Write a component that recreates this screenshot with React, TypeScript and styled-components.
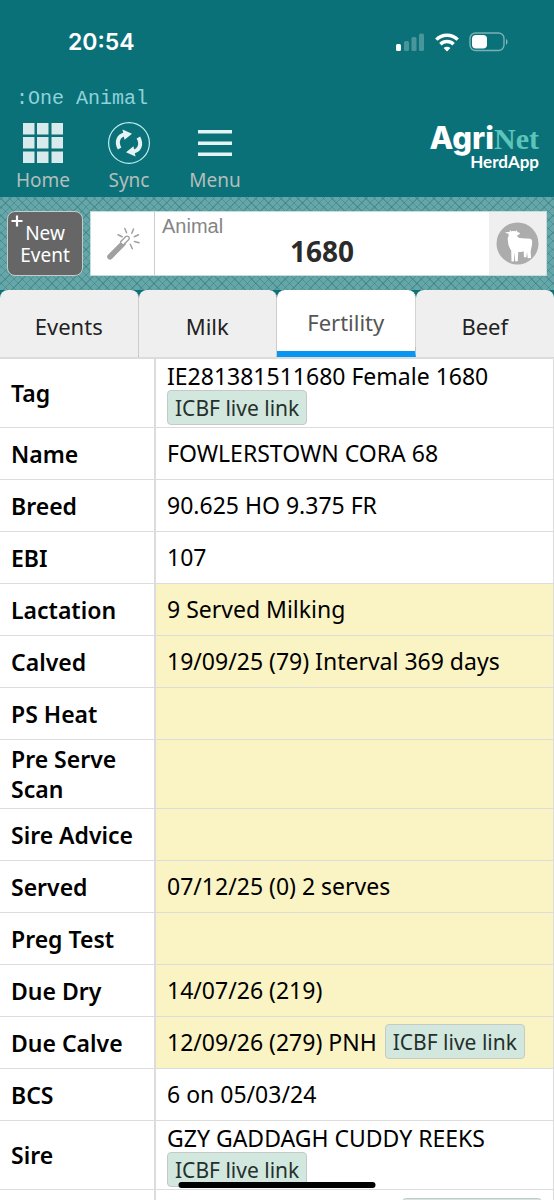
import React from "react";
import styled, { createGlobalStyle } from "styled-components";

const teal = "#0b7179";
const line = "#dcdcdc";
const sans = `"Trebuchet MS", "Noto Sans", "Open Sans", sans-serif`;

const Global = createGlobalStyle`
  *, *::before, *::after { box-sizing: border-box; }
  body { margin: 0; background: #fff; font-family: ${sans}; color: #000; }
  button, input { font: inherit; color: inherit; margin: 0; }
`;

const Screen = styled.div`
  width: 100%;
  height: 100vh;
  overflow: hidden;
`;

const Header = styled.header`
  background: ${teal};
  color: #fff;
  height: 197px;
  display: flex;
  flex-direction: column;
`;

const StatusBar = styled.div`
  display: flex;
  align-items: center;
  justify-content: space-between;
  height: 84px;
  padding: 0 45px 0 68px;
`;

const Clock = styled.time`
  font: 600 23px/32px Inter, sans-serif;
`;

const Indicators = styled.div`
  display: flex;
  align-items: center;
  gap: 10px;
  svg { display: block; }
`;

const PageName = styled.div`
  padding: 1px 16px;
  font: 20px/28px "Liberation Mono", monospace;
  color: #8fd3da;
`;

const NavRow = styled.div`
  display: flex;
  justify-content: space-between;
  padding: 8px 15px 0 0;
`;

const Nav = styled.nav`
  display: flex;
`;

const NavButton = styled.button`
  width: 86px;
  padding: 0;
  border: 0;
  background: none;
  display: flex;
  flex-direction: column;
  align-items: center;
  gap: 4px;
  font-size: 19px;
  line-height: 24px;
  color: #b5bebb;
  svg { display: block; }
`;

const Brand = styled.div`
  display: flex;
  flex-direction: column;
  align-items: flex-end;
`;

const BrandName = styled.div`
  display: flex;
  align-items: baseline;
  font: 800 31px/32px Inter, sans-serif;
  span { font: 700 30px/32px "Liberation Serif", serif; color: #5cc4bb; }
`;

const BrandSub = styled.div`
  font: 700 17px/14px Lato, sans-serif;
`;

const Toolbar = styled.div`
  display: flex;
  gap: 7px;
  height: 93px;
  padding: 14px 7px 14px;
  background:
    repeating-linear-gradient(45deg, transparent 0 5px, rgba(30, 110, 114, 0.35) 5px 6px),
    repeating-linear-gradient(-45deg, transparent 0 5px, rgba(30, 110, 114, 0.35) 5px 6px),
    #66a6a8;
`;

const NewEvent = styled.button`
  position: relative;
  width: 76px;
  padding: 0;
  border: 1px solid #c4cccc;
  border-radius: 8px;
  background: #666;
  color: #fff;
  font-size: 19px;
  line-height: 22px;
`;

const Plus = styled.svg`
  position: absolute;
  left: 3px;
  top: 3px;
`;

const AnimalBox = styled.div`
  flex: 1;
  display: flex;
  border: 1px solid #c3dcdc;
  background: #fff;
`;

const WandButton = styled.button`
  width: 64px;
  padding: 0;
  border: 0;
  border-right: 1px solid #ccc;
  background: #fff;
  svg { display: block; margin: auto; }
`;

const AnimalField = styled.label`
  flex: 1;
  min-width: 0;
  display: flex;
  flex-direction: column;
  span { padding: 3px 7px 0; font: 20px/22px "Liberation Sans", sans-serif; color: #858585; }
`;

const AnimalInput = styled.input`
  width: 100%;
  padding: 0;
  border: 0;
  outline: 0;
  background: none;
  text-align: center;
  font-weight: 700;
  font-size: 28px;
  line-height: 28px;
  height: 28px;
  color: #2b2b2b;
`;

const CowButton = styled.button`
  width: 57px;
  padding: 0;
  border: 0;
  background: #efefef;
  svg { display: block; margin: auto; }
`;

const Tabs = styled.div`
  display: grid;
  grid-template-columns: repeat(4, 1fr);
  height: 69px;
  background: ${teal};
  border-bottom: 2px solid ${line};
`;

const Tab = styled.button<{ $active?: boolean }>`
  padding: ${(p) => (p.$active ? "2px 0 0" : "4px 0 0")};
  border: 0;
  border-right: 1px dotted #aaa;
  border-bottom: ${(p) => (p.$active ? "6px solid #0797f2" : "0")};
  border-radius: 8px 8px 0 0;
  background: ${(p) => (p.$active ? "#fff" : "#efefef")};
  color: ${(p) => (p.$active ? "#555" : "#222")};
  font-size: 22px;
  line-height: 28px;
  &:last-child { border-right: 0; }
`;

const Table = styled.table`
  width: 100%;
  border-collapse: collapse;
  table-layout: fixed;
  border-right: 1px solid ${line};
  font-size: 23px;
  line-height: 30px;
`;

const Label = styled.th`
  width: 155px;
  height: 52px;
  padding: 4px 11px;
  border-right: 2px solid ${line};
  border-bottom: 1px solid ${line};
  text-align: left;
  font-weight: 600;
`;

const Value = styled.td<{ $hot?: boolean }>`
  padding: 0 11px;
  border-bottom: 1px solid ${line};
  background: ${(p) => (p.$hot ? "#faf3c4" : "#fff")};
`;

const Entry = styled.div<{ $stacked?: boolean }>`
  display: flex;
  flex-direction: ${(p) => (p.$stacked ? "column" : "row")};
  align-items: ${(p) => (p.$stacked ? "flex-start" : "center")};
  gap: ${(p) => (p.$stacked ? "0" : "8px")};
  padding: ${(p) => (p.$stacked ? "3px 0 2px" : "0 0 2px")};
  line-height: 28px;
  white-space: nowrap;
`;

const LiveLink = styled.button`
  height: 35px;
  padding: 0 7px;
  border: 1px solid #c4cbc7;
  border-radius: 4px;
  background: #d2e8df;
  color: #26302c;
  font-size: 21px;
  line-height: 28px;
`;

const Trailing = styled.div`
  display: flex;
  justify-content: flex-end;
  padding: 8px 0;
`;

const HomeIndicator = styled.div`
  position: fixed;
  left: 50%;
  bottom: 12px;
  width: 197px;
  height: 6px;
  border-radius: 3px;
  background: #000;
  transform: translateX(-50%);
`;

type Row = { label: string; value?: string; hot?: boolean; link?: boolean; stacked?: boolean };

const rows: Row[] = [
  { label: "Tag", value: "IE281381511680 Female 1680", link: true, stacked: true },
  { label: "Name", value: "FOWLERSTOWN CORA 68" },
  { label: "Breed", value: "90.625 HO 9.375 FR" },
  { label: "EBI", value: "107" },
  { label: "Lactation", value: "9 Served Milking", hot: true },
  { label: "Calved", value: "19/09/25 (79) Interval 369 days", hot: true },
  { label: "PS Heat", hot: true },
  { label: "Pre Serve Scan", hot: true },
  { label: "Sire Advice", hot: true },
  { label: "Served", value: "07/12/25 (0) 2 serves", hot: true },
  { label: "Preg Test", hot: true },
  { label: "Due Dry", value: "14/07/26 (219)", hot: true },
  { label: "Due Calve", value: "12/09/26 (279) PNH", hot: true, link: true },
  { label: "BCS", value: "6 on 05/03/24" },
  { label: "Sire", value: "GZY GADDAGH CUDDY REEKS", link: true, stacked: true },
];

const Signal = () => (
  <svg width="29" height="19" viewBox="0 0 29 19" fill="#fff" aria-hidden="true">
    <rect x="0" y="11" width="5" height="7" rx="1.5" />
    <g opacity="0.25">
      <rect x="8" y="8" width="5" height="10" rx="1.5" />
      <rect x="15.500" y="4" width="5" height="14" rx="1.5" />
      <rect x="23" y="0.500" width="5" height="17.500" rx="1.5" />
    </g>
  </svg>
);

const Wifi = () => (
  <svg width="24" height="19" viewBox="0 0 24 19" aria-hidden="true">
    <g fill="none" stroke="#fff" strokeWidth="3.400">
      <path d="M1.300 6.600a15.200 15.200 0 0 1 21.400 0" />
      <path d="M5.400 11.200a9.300 9.300 0 0 1 13.200 0" />
    </g>
    <path d="M12 18.500l-3.400-3.400a4.900 4.900 0 0 1 6.800 0z" fill="#fff" />
  </svg>
);

const Battery = () => (
  <svg width="40" height="20" viewBox="0 0 40 20" aria-hidden="true">
    <rect x="1" y="1" width="34" height="17.500" rx="5.500" fill="none" stroke="#fff" strokeOpacity="0.45" strokeWidth="1.400" />
    <rect x="3" y="3" width="15" height="13.500" rx="4" fill="#fff" />
    <path d="M37 7c2 .8 2 5 0 5.800z" fill="#fff" opacity="0.5" />
  </svg>
);

const GridIcon = () => (
  <svg width="42" height="42" viewBox="0 0 42 42" fill="#d9eaec" aria-hidden="true">
    {[1, 15, 29.5].map((y) => [1, 15, 29.5].map((x) => (
      <rect key={`${x}-${y}`} x={x} y={y} width="11.500" height="11.500" />
    )))}
  </svg>
);

const SyncIcon = () => (
  <svg width="44" height="42" viewBox="0 0 44 42" aria-hidden="true">
    <circle cx="22" cy="21" r="20.400" fill="none" stroke="#bdeef2" strokeWidth="1.200" />
    <g fill="none" stroke="#e6f3f4" strokeWidth="4">
      <path d="M12.600 26.500C8.800 19.500 11.500 13.500 18 12.400" />
      <path d="M31.400 15.500C35.200 22.500 32.500 28.500 26 29.600" />
    </g>
    <path d="M15.500 7.500l9.500 4.200-7.500 6zM28.500 34.500l-9.500-4.200 7.500-6z" fill="#e6f3f4" />
  </svg>
);

const MenuIcon = () => (
  <svg width="36" height="42" viewBox="0 0 36 42" fill="#e3f4f6" aria-hidden="true">
    <rect x="1" y="8" width="34" height="3.500" />
    <rect x="1" y="19.500" width="34" height="3.500" />
    <rect x="1" y="30.500" width="34" height="3.500" />
  </svg>
);

const WandIcon = () => (
  <svg width="34" height="34" viewBox="0 0 34 34" fill="none" stroke="#a0a0a0" strokeLinecap="round" aria-hidden="true">
    <path d="M4 29.800L17 16.600" strokeWidth="5.600" />
    <path d="M14.600 14.800l5.200-5.200q1.400-1 2.800.2t.2 2.800l-5.200 5.200" strokeWidth="1.400" fill="#fff" />
    <path d="M18.800 1.500l1.800 4.200M27.500 2l-1.700 4.200M12 7.800l4.200 2M32.500 7.800l-4.200 2M28.500 14.500l4.500 1.200M24.300 17.200l2 4.500" strokeWidth="1.500" />
  </svg>
);

const CowIcon = () => (
  <svg width="43" height="43" viewBox="0 0 43 43" aria-hidden="true">
    <circle cx="21.500" cy="21.500" r="21" fill="#acacac" />
    <path
      fill="#fff"
      d="M9 10.500c2-.8 3.300-.4 4.600-.6l.3-2 1.600 1.500c1.400-.6 2.600-.6 3.900 0L21 8l.3 2.200c1.200.2 1.800.2 2.700.7-.5 1.500-1.500 2.200-2.800 2.200.1 1.800.8 2.600 2.300 2.900 3.500.6 8.500.2 10.800.8 1.800.5 2 2.300 1.800 4.700-.3 3.500-1 5.300-1.400 7.500-.2 2 .4 4.500.3 7l-3.300.2-.7-6.500-.6 5.500h-2.500l-.2-6c-1.600.9-3.600.9-5.400.5l-.5 9.500h-2.700l-.5-9-.8 9.200h-2.300l-.3-11c-2-3-3.200-6-3.200-9.200-.6-2-.3-4 .7-5.400-.2-1-.3-1.500-.3-2.200-1.300.1-2.400-.3-3.400-1.100z"
    />
  </svg>
);

export default function App() {
  return (
    <Screen>
      <Global />
      <Header>
        <StatusBar>
          <Clock>20:54</Clock>
          <Indicators>
            <Signal />
            <Wifi />
            <Battery />
          </Indicators>
        </StatusBar>
        <PageName>:One Animal</PageName>
        <NavRow>
          <Nav>
            <NavButton type="button"><GridIcon />Home</NavButton>
            <NavButton type="button"><SyncIcon />Sync</NavButton>
            <NavButton type="button"><MenuIcon />Menu</NavButton>
          </Nav>
          <Brand>
            <BrandName>Agri<span>Net</span></BrandName>
            <BrandSub>HerdApp</BrandSub>
          </Brand>
        </NavRow>
      </Header>
      <Toolbar>
        <NewEvent type="button">
          <Plus width="12" height="12" viewBox="0 0 12 12" aria-hidden="true">
            <path d="M6 0.500v11M0.500 6h11" stroke="#fff" strokeWidth="2.200" />
          </Plus>
          New<br />Event
        </NewEvent>
        <AnimalBox>
          <WandButton type="button" aria-label="Pick animal"><WandIcon /></WandButton>
          <AnimalField>
            <span>Animal</span>
            <AnimalInput defaultValue="1680" />
          </AnimalField>
          <CowButton type="button" aria-label="Animal list"><CowIcon /></CowButton>
        </AnimalBox>
      </Toolbar>
      <Tabs role="tablist">
        {["Events", "Milk", "Fertility", "Beef"].map((name) => (
          <Tab key={name} type="button" role="tab" aria-selected={name === "Fertility"} $active={name === "Fertility"}>
            {name}
          </Tab>
        ))}
      </Tabs>
      <Table>
        <tbody>
          {rows.map((row) => (
            <tr key={row.label}>
              <Label scope="row">{row.label}</Label>
              <Value $hot={row.hot}>
                <Entry $stacked={row.stacked}>
                  {row.value && <span>{row.value}</span>}
                  {row.link && <LiveLink type="button">ICBF live link</LiveLink>}
                </Entry>
              </Value>
            </tr>
          ))}
          <tr>
            <Label scope="row" />
            <Value>
              <Trailing><LiveLink type="button">ICBF live link</LiveLink></Trailing>
            </Value>
          </tr>
        </tbody>
      </Table>
      <HomeIndicator />
    </Screen>
  );
}
